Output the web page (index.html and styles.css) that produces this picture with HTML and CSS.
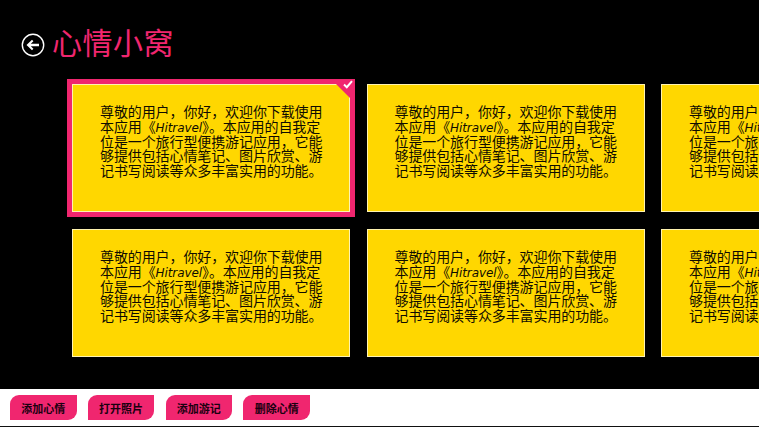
FILE: index.html
```html
<!DOCTYPE html>
<html lang="zh-CN">
<head>
    <meta charset="UTF-8">
    <title>心情小窝</title>
    <link rel="stylesheet" href="styles.css">
</head>
<body>
    <div class="page">
        <header class="header">
            <svg class="back" width="24" height="24" viewBox="0 0 24 24">
                <circle cx="12" cy="12" r="10.7" fill="none" stroke="#fff" stroke-width="1.4"/>
                <path d="M5.5 12 L11 6.8 L12.4 8.2 L9.8 10.8 H18 V13.2 H9.8 L12.4 15.8 L11 17.2 Z" fill="#fff"/>
            </svg>
            <h1 class="title">心情小窝</h1>
        </header>
        <main class="grid">
            <div class="card selected">
                <p class="note">尊敬的用户，你好，欢迎你下载使用<br>本应用《<span class="latin">Hitravel</span>》。本应用的自我定<br>位是一个旅行型便携游记应用，它能<br>够提供包括心情笔记、图片欣赏、游<br>记书写阅读等众多丰富实用的功能。</p>
                <svg class="check" width="10" height="9" viewBox="0 0 10 9">
                    <path d="M1 4.5 L3.8 7.2 L9 1.2" fill="none" stroke="#fff" stroke-width="2"/>
                </svg>
            </div>
            <div class="card">
                <p class="note">尊敬的用户，你好，欢迎你下载使用<br>本应用《<span class="latin">Hitravel</span>》。本应用的自我定<br>位是一个旅行型便携游记应用，它能<br>够提供包括心情笔记、图片欣赏、游<br>记书写阅读等众多丰富实用的功能。</p>
            </div>
            <div class="card">
                <p class="note">尊敬的用户，你好，欢迎你下载使用<br>本应用《<span class="latin">Hitravel</span>》。本应用的自我定<br>位是一个旅行型便携游记应用，它能<br>够提供包括心情笔记、图片欣赏、游<br>记书写阅读等众多丰富实用的功能。</p>
            </div>
            <div class="card">
                <p class="note">尊敬的用户，你好，欢迎你下载使用<br>本应用《<span class="latin">Hitravel</span>》。本应用的自我定<br>位是一个旅行型便携游记应用，它能<br>够提供包括心情笔记、图片欣赏、游<br>记书写阅读等众多丰富实用的功能。</p>
            </div>
            <div class="card">
                <p class="note">尊敬的用户，你好，欢迎你下载使用<br>本应用《<span class="latin">Hitravel</span>》。本应用的自我定<br>位是一个旅行型便携游记应用，它能<br>够提供包括心情笔记、图片欣赏、游<br>记书写阅读等众多丰富实用的功能。</p>
            </div>
            <div class="card">
                <p class="note">尊敬的用户，你好，欢迎你下载使用<br>本应用《<span class="latin">Hitravel</span>》。本应用的自我定<br>位是一个旅行型便携游记应用，它能<br>够提供包括心情笔记、图片欣赏、游<br>记书写阅读等众多丰富实用的功能。</p>
            </div>
        </main>
        <footer class="appbar">
            <button class="action">添加心情</button>
            <button class="action">打开照片</button>
            <button class="action">添加游记</button>
            <button class="action">删除心情</button>
        </footer>
    </div>
</body>
</html>
```

FILE: styles.css
```css
html, body {
    margin: 0;
    height: 100%;
    overflow: hidden;
    background: #000;
}

body {
    font-family: "Noto Sans CJK SC", "Noto Sans", sans-serif;
}

.page {
    width: 759px;
    height: 427px;
    display: flex;
    flex-direction: column;
    overflow: hidden;
}

.header {
    height: 84px;
    box-sizing: border-box;
    padding: 19px 0 0 21px;
    display: flex;
    align-items: flex-start;
    gap: 7px;
}

.back {
    margin-top: 14px;
}

.title {
    margin: 0;
    font-size: 30px;
    font-weight: 400;
    line-height: 44px;
    letter-spacing: 0.5px;
    color: #f0266f;
}

.grid {
    display: grid;
    grid-template-columns: repeat(3, 278px);
    grid-template-rows: repeat(2, 128px);
    gap: 17px 16.5px;
    padding-left: 72px;
}

.card {
    position: relative;
    box-sizing: border-box;
    background: #ffd700;
    border: 1px solid #fff3b0;
    padding: 19px 27px 0;
}

.selected {
    outline: 5px solid #f0266f;
    outline-offset: 0;
}

.selected::before {
    content: "";
    position: absolute;
    top: -1px;
    right: -1px;
    border-top: 14px solid #f0266f;
    border-left: 14px solid transparent;
}

.check {
    position: absolute;
    top: -5px;
    right: -4px;
}

.note {
    margin: 0;
    width: 226px;
    font-size: 14px;
    line-height: 14.75px;
    letter-spacing: -0.1px;
    color: #0f0c00;
    white-space: nowrap;
}

.latin {
    font-family: "DejaVu Sans", sans-serif;
    font-style: italic;
    font-size: 12px;
    font-weight: 400;
    line-height: 0;
}

.appbar {
    margin-top: auto;
    height: 37px;
    background: #fff;
    border-bottom: 1px solid #111;
    display: flex;
    align-items: center;
    gap: 11.3px;
    padding-left: 10px;
}

.action {
    width: 66.5px;
    height: 25px;
    padding: 0;
    border: 0;
    border-radius: 9px 0 9px 0;
    background: #f0266f;
    color: #1a0010;
    font-family: inherit;
    font-size: 11px;
    font-weight: 700;
}
```
